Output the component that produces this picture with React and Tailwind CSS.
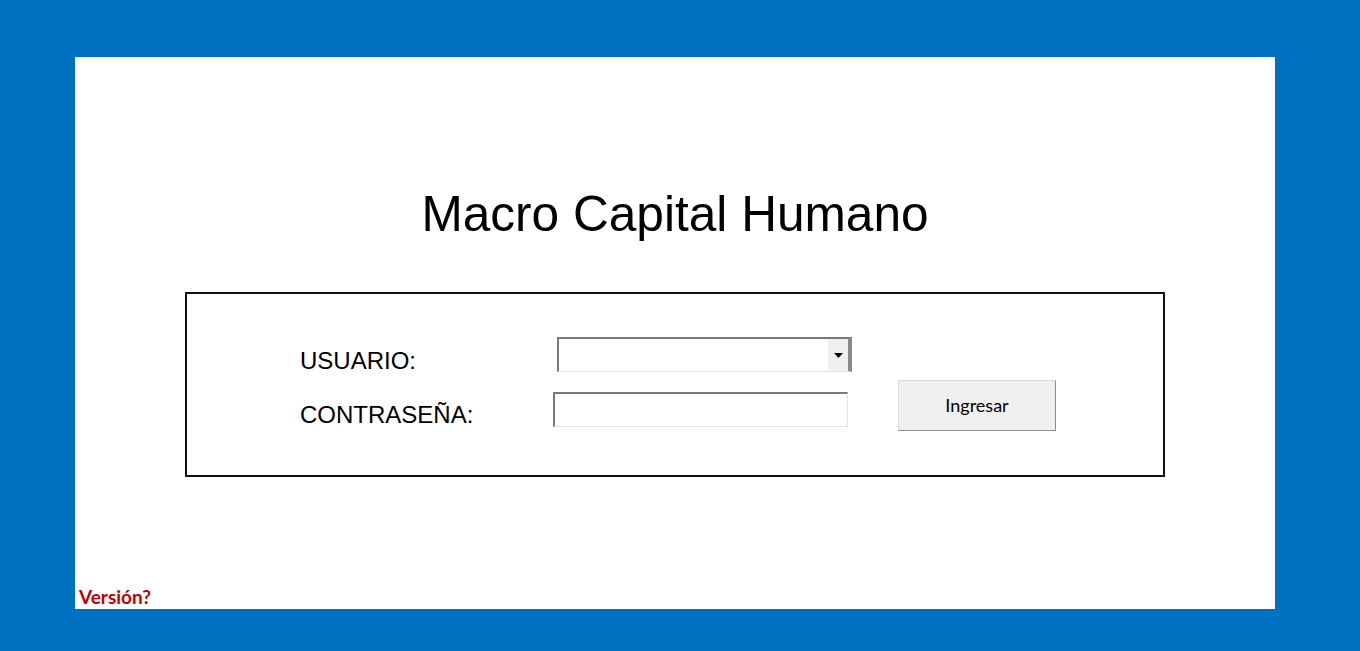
import React from 'react';

export default function App() {
  return (
    <div className="h-[651px] w-[1360px] bg-[#0070C0] pt-[57px] pl-[75px] pr-[85px] pb-[42px]">
      <div className="h-full bg-white flex flex-col">
        {/* Title */}
        <h1 className="mt-[132px] text-center text-[49.6px] leading-[50px] text-black font-['Liberation_Sans',Arial,sans-serif]">
          Macro Capital Humano
        </h1>

        {/* Login box */}
        <div className="mt-[53px] mx-auto w-[980px] h-[185px] border-2 border-[#111] pl-[113px] pt-[43px] flex items-start font-['Liberation_Sans',Arial,sans-serif] text-[24px] text-black">
          <div className="flex flex-col gap-[20px]">
            <div className="flex h-[35px]">
              <span className="w-[257px] leading-[47px]">USUARIO:</span>
              <div className="w-[295px] h-[35px] flex justify-end bg-white border-t-2 border-l-2 border-r-[4px] border-b border-t-[#7a7a7a] border-l-[#7a7a7a] border-r-[#8a8a8a] border-b-[#e3e3e3]">
                <div className="w-[20px] h-full bg-[#f0f0f0] flex items-center justify-center">
                  <svg width="9" height="5" viewBox="0 0 9 5">
                    <path d="M0 0 H9 L4.5 5 Z" fill="#000" />
                  </svg>
                </div>
              </div>
            </div>
            <div className="flex h-[35px]">
              <span className="w-[253px] leading-[45px]">CONTRASEÑA:</span>
              <div className="w-[295px] h-[35px] bg-white border-t-2 border-l-2 border-r border-b border-t-[#7a7a7a] border-l-[#7a7a7a] border-r-[#e3e3e3] border-b-[#e3e3e3]" />
            </div>
          </div>

          <button className="ml-[46px] mt-[43px] w-[158px] h-[51px] bg-[#f0f0f0] border border-[#dadada] border-r-[#8c8c8c] border-b-[#8c8c8c] text-[18px] text-black font-['Lato',sans-serif]">
            Ingresar
          </button>
        </div>

        {/* Version */}
        <div className="mt-auto pl-[4px] pb-[1px] text-[19px] leading-[22px] font-bold text-[#C00000] font-['Lato',sans-serif]">
          Versión?
        </div>
      </div>
    </div>
  );
}
